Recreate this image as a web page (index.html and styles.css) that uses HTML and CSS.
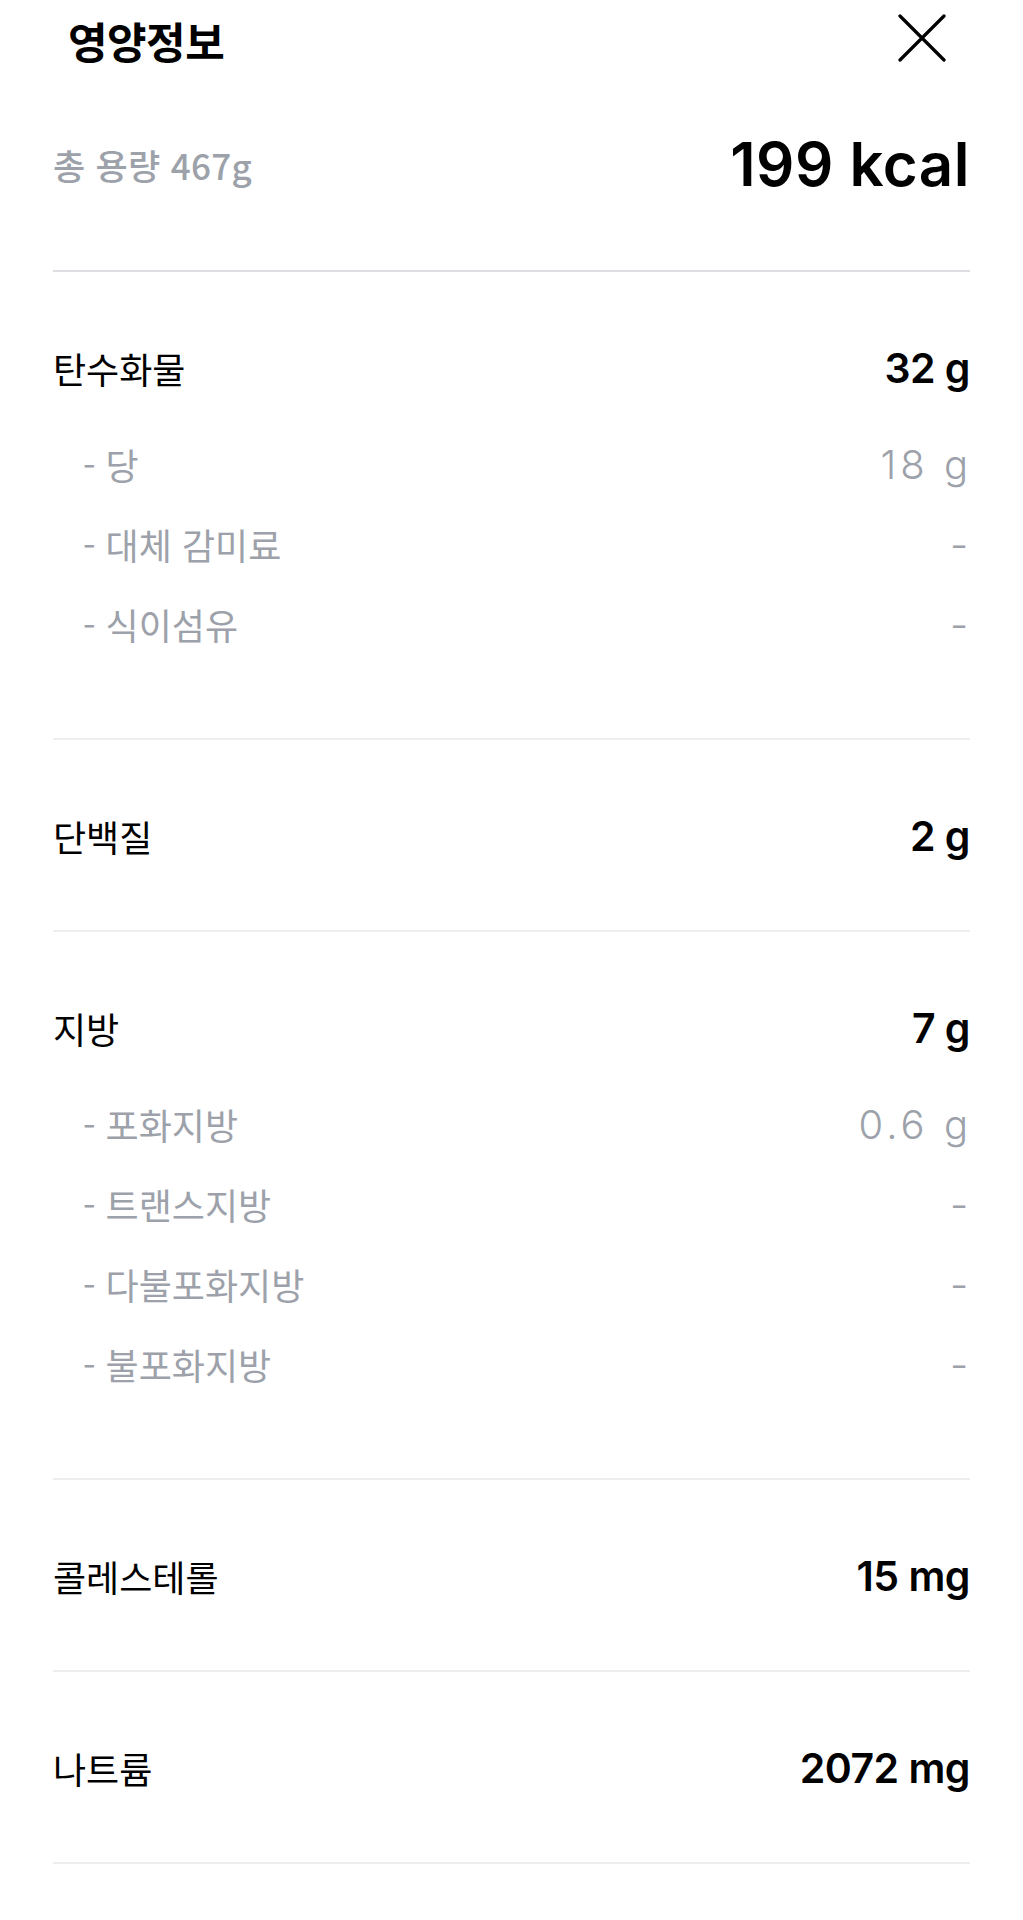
FILE: index.html
```html
<!DOCTYPE html>
<html lang="ko">
<head>
    <meta charset="utf-8">
    <link rel="stylesheet" href="styles.css">
</head>
<body>
<div class="sheet">
  <div class="header">
    <h2 class="title">영양정보</h2>
    <button class="close" aria-label="닫기">
      <svg width="48" height="48" viewBox="0 0 48 48">
        <path d="M2 2 L46 46 M46 2 L2 46" stroke="#000" stroke-width="3.2" stroke-linecap="round" fill="none"/>
      </svg>
    </button>
  </div>

  <div class="summary">
    <span class="total">총 용량 467g</span>
    <span class="kcal">199 kcal</span>
  </div>

  <div class="section">
    <div class="row main"><span>탄수화물</span><span class="val">32 g</span></div>
    <div class="subs">
      <div class="row sub"><span>- 당</span><span class="val">18 g</span></div>
      <div class="row sub"><span>- 대체 감미료</span><span class="val">-</span></div>
      <div class="row sub"><span>- 식이섬유</span><span class="val">-</span></div>
    </div>
  </div>

  <div class="section">
    <div class="row main"><span>단백질</span><span class="val">2 g</span></div>
  </div>

  <div class="section">
    <div class="row main"><span>지방</span><span class="val">7 g</span></div>
    <div class="subs">
      <div class="row sub"><span>- 포화지방</span><span class="val">0.6 g</span></div>
      <div class="row sub"><span>- 트랜스지방</span><span class="val">-</span></div>
      <div class="row sub"><span>- 다불포화지방</span><span class="val">-</span></div>
      <div class="row sub"><span>- 불포화지방</span><span class="val">-</span></div>
    </div>
  </div>

  <div class="section">
    <div class="row main"><span>콜레스테롤</span><span class="val">15 mg</span></div>
  </div>

  <div class="section">
    <div class="row main"><span>나트륨</span><span class="val">2072 mg</span></div>
  </div>
</div>
</body>
</html>
```

FILE: styles.css
```css
body {
  margin: 0;
  background: #fff;
  color: #000;
  font-family: "Inter", "Noto Sans CJK KR", sans-serif;
}

.sheet {
  padding: 0 53px;
}

.header {
  height: 80px;
  display: flex;
  align-items: center;
  justify-content: space-between;
  padding: 0 24px 0 15px;
}

.title {
  margin: 0;
  font-family: "Noto Sans CJK KR", sans-serif;
  font-size: 43px;
  font-weight: 700;
  letter-spacing: -0.5px;
}

.close {
  border: 0;
  background: none;
  padding: 0;
  width: 48px;
  height: 48px;
  margin-top: -4px;
}

.close svg {
  display: block;
}

.summary {
  display: flex;
  align-items: center;
  justify-content: space-between;
  height: 88px;
  padding: 40px 0 62px;
  border-bottom: 2px solid #dcdee2;
}

.total {
  font-family: "Noto Sans CJK KR", sans-serif;
  font-size: 35px;
  font-weight: 500;
  color: #9ca1aa;
  letter-spacing: 0.3px;
}

.kcal {
  font-size: 60px;
  font-weight: 600;
  letter-spacing: 0.5px;
}

.section {
  padding: 60px 0 58px;
  border-bottom: 2px solid #eceef0;
}

.row {
  display: flex;
  align-items: center;
  justify-content: space-between;
}

.main {
  height: 72px;
  font-size: 36px;
}

.main span:first-child {
  font-family: "Noto Sans CJK KR", sans-serif;
}

.main .val {
  font-size: 41px;
  font-weight: 600;
  letter-spacing: -0.5px;
}

.subs {
  padding: 20px 0 16px;
}

.sub {
  height: 80px;
  padding-left: 30px;
  font-size: 36px;
  color: #9ca1aa;
}

.sub span:first-child {
  font-family: "Noto Sans CJK KR", sans-serif;
}

.sub .val {
  font-size: 40px;
  font-weight: 300;
  letter-spacing: 4px;
  margin-right: -2px;
}
```
